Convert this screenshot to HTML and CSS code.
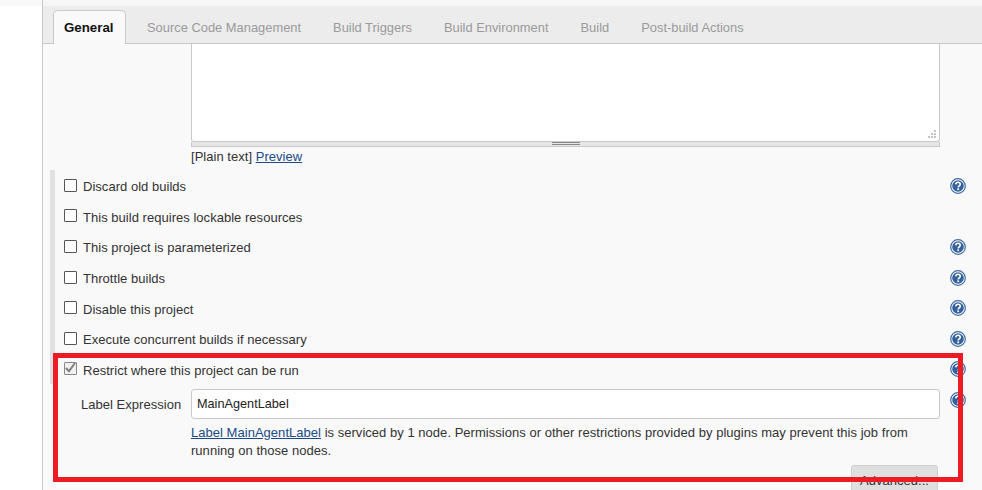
FILE: index.html
```html
<!DOCTYPE html>
<html lang="en">
<head>
<meta charset="utf-8">
<title>General</title>
<link rel="stylesheet" href="styles.css">
</head>
<body>
<div class="page">
  <div class="gutter"></div>
  <main class="main">
    <nav class="tabs">
      <a class="tab active">General</a>
      <a class="tab">Source Code Management</a>
      <a class="tab">Build Triggers</a>
      <a class="tab">Build Environment</a>
      <a class="tab">Build</a>
      <a class="tab">Post-build Actions</a>
    </nav>
    <div class="editor">
      <div class="textarea"><svg class="grip" width="8" height="8" viewBox="0 0 8 8"><path d="M6 0h2v2H6zM3 3h2v2H3zM6 3h2v2H6zM0 6h2v2H0zM3 6h2v2H3zM6 6h2v2H6z" fill="#c4c4c4"/></svg></div>
      <div class="handle"><span class="handle-mark"></span></div>
      <div class="format">[Plain text] <a class="link">Preview</a></div>
    </div>
    <section class="options">
      <div class="option"><span class="box"></span><span class="label">Discard old builds</span><svg class="help"><use href="#q"/></svg></div>
      <div class="option"><span class="box"></span><span class="label">This build requires lockable resources</span></div>
      <div class="option"><span class="box"></span><span class="label">This project is parameterized</span><svg class="help"><use href="#q"/></svg></div>
      <div class="option"><span class="box"></span><span class="label">Throttle builds</span><svg class="help"><use href="#q"/></svg></div>
      <div class="option"><span class="box"></span><span class="label">Disable this project</span><svg class="help"><use href="#q"/></svg></div>
      <div class="option"><span class="box"></span><span class="label">Execute concurrent builds if necessary</span><svg class="help"><use href="#q"/></svg></div>
      <div class="option"><span class="box checked"><svg width="13" height="13" viewBox="0 0 13 13"><path d="M2 6l3 3.2L11 1" fill="none" stroke="#808080" stroke-width="2"/></svg></span><span class="label">Restrict where this project can be run</span><svg class="help"><use href="#q"/></svg></div>
    </section>
    <section class="nested">
      <div class="field">
        <span class="field-label">Label Expression</span>
        <div class="input">MainAgentLabel</div>
        <svg class="help field-help"><use href="#q"/></svg>
      </div>
      <p class="note"><a class="link">Label MainAgentLabel</a> is serviced by 1 node. Permissions or other restrictions provided by plugins may prevent this job from running on those nodes.</p>
      <div class="actions"><span class="button">Advanced...</span></div>
    </section>
  </main>
</div>
<div class="annotation"></div>
<svg width="0" height="0" class="defs">
  <symbol id="q" viewBox="0 0 16 16">
    <circle cx="8" cy="8" r="7.3" fill="#fff" stroke="#3d6aa3" stroke-width="1.2"/>
    <circle cx="8" cy="8" r="5.8" fill="#34619b"/>
    <path d="M5.8 6.4C5.9 5 6.8 4.3 8 4.3s2.2.8 2.2 1.9c0 1.6-2 1.6-2 3.3" fill="none" stroke="#fff" stroke-width="1.6"/>
    <rect x="7.3" y="10.4" width="1.8" height="1.7" fill="#fff"/>
  </symbol>
</svg>
</body>
</html>
```
FILE: styles.css
```css
html, body {
  margin: 0;
  height: 490px;
  overflow: hidden;
  background: #fff;
}
body {
  font-family: "Liberation Sans", Arial, sans-serif;
  font-size: 13px;
  letter-spacing: 0.03px;
  color: #333;
  position: relative;
}
.defs { position: absolute; }
.page {
  display: flex;
  height: 490px;
}
.gutter {
  width: 42px;
  flex: none;
  background: #fff;
  border-top: 6px solid #f8f8f8;
}
.main {
  flex: 1;
  background: #f9f9f9;
  border-left: 1px solid #c9c9c9;
  padding-top: 6px;
  box-shadow: inset 0 6px 0 #f6f6f6;
}
.tabs {
  height: 37px;
  display: flex;
  align-items: flex-end;
  background: #ececec;
  border-bottom: 1px solid #c8c8c8;
  padding-left: 10px;
}
.tab {
  height: 33px;
  line-height: 33px;
  padding: 0 16px;
  color: #9a9a9a;
  font-size: 12.9px;
  letter-spacing: 0;
  margin-bottom: -1px;
}
.active {
  width: 73px;
  box-sizing: border-box;
  padding: 0 10px;
  color: #111;
  font-size: 13.3px;
  font-weight: bold;
  background: #f9f9f9;
  border: 1px solid #c8c8c8;
  border-bottom: none;
  border-radius: 5px 5px 0 0;
  height: 34px;
  margin-right: 5px;
}
.editor {
  margin-left: 148px;
  width: 749px;
}
.textarea {
  height: 98px;
  background: #fff;
  border: 1px solid #c8c8c8;
  border-top: none;
  border-radius: 0 0 3px 3px;
  display: flex;
  align-items: flex-end;
  justify-content: flex-end;
  padding: 0 3px 3px 0;
  box-sizing: border-box;
}
.handle {
  height: 5px;
  background: #e6e6e6;
  border: 1px solid #c8c8c8;
  border-top-width: 0;
  box-sizing: border-box;
  display: flex;
  justify-content: center;
}
.handle-mark {
  width: 28px;
  height: 3px;
  border-top: 1px solid #888;
  border-bottom: 1px solid #888;
  box-sizing: border-box;
}
.format {
  margin-top: 2px;
  line-height: 16px;
}
.link {
  color: #204a87;
  text-decoration: underline;
}
.options {
  margin: 5px 0 0 7px;
  border-left: 5px solid #e1e1e1;
  padding-left: 9px;
  height: 214px;
}
.option {
  height: 30.65px;
  display: flex;
  align-items: center;
  position: relative;
  box-sizing: border-box;
  padding-top: 2.6px;
}
.box {
  width: 13px;
  height: 13px;
  box-sizing: border-box;
  border: 1px solid #555;
  background: #fff;
  border-radius: 1px;
  margin-right: 6px;
  flex: none;
  display: block;
  margin-top: -3px;
  overflow: visible;
}
.box svg { display: block; margin: -1px; }
.checked { border-color: #888; background: #f1f1f1; }
.label { color: #333; }
.help {
  width: 16px;
  height: 16px;
  position: absolute;
  left: 886px;
  top: 7.6px;
}
.nested { position: relative; }
.field {
  display: flex;
  align-items: center;
  position: relative;
  margin-top: 5px;
}
.field-label {
  width: 148px;
  box-sizing: border-box;
  padding-left: 38px;
  color: #333;
}
.input {
  width: 749px;
  height: 30px;
  line-height: 28px;
  box-sizing: border-box;
  background: #fff;
  border: 1px solid #c8c8c8;
  border-radius: 3px;
  padding-left: 5px;
  color: #222;
  font-size: 12.7px;
  letter-spacing: 0;
}
.field-help {
  left: 907px;
  top: 3px;
}
.note {
  margin: 5px 0 0 148px;
  width: 722px;
  line-height: 18px;
}
.actions {
  margin: 5px 0 0 808px;
}
.button {
  display: block;
  width: 87px;
  height: 30px;
  line-height: 30px;
  text-align: center;
  background: #dfdfdf;
  border: 1px solid #cfcfcf;
  border-radius: 3px;
  box-sizing: border-box;
  font-size: 13px;
}
.annotation {
  position: absolute;
  left: 53px;
  top: 353px;
  width: 910px;
  height: 129px;
  border: 5px solid #ed1c24;
  box-sizing: border-box;
}
```
